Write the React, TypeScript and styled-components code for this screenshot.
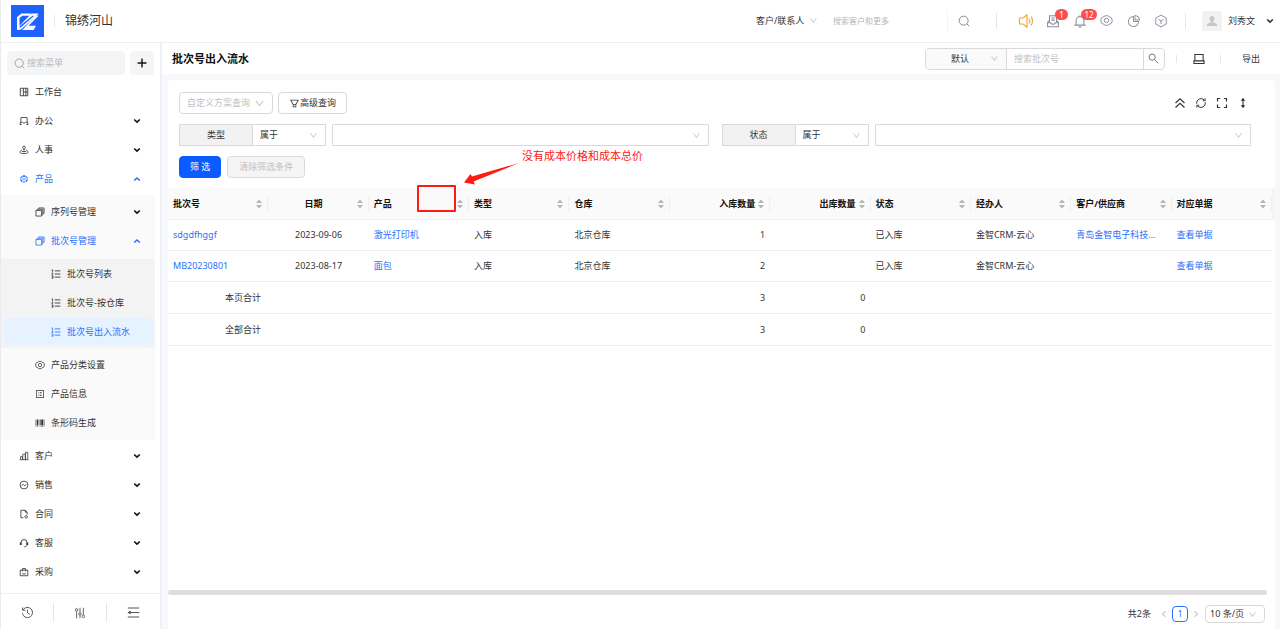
import React from "react";
import styled, { createGlobalStyle, css } from "styled-components";
import {
  AiOutlineBarcode,
  AiOutlineCodeSandbox,
  AiOutlineDown,
  AiOutlineFilter,
  AiOutlineLeft,
  AiOutlinePieChart,
  AiOutlinePlus,
  AiOutlineProfile,
  AiOutlineRight,
} from "react-icons/ai";

const blue = "#2b70fb";
const line = "#f0f0f0";
const control = "#d9d9d9";

const GlobalStyle = createGlobalStyle`
  * { box-sizing: border-box; }
  body {
    margin: 0;
    background: #fff;
    color: #333;
    font: 9px/16px "Noto Sans", "Noto Sans CJK SC", sans-serif;
  }
  button, input, select { font: inherit; color: inherit; margin: 0; outline: none; }
  button { cursor: pointer; }
  a { color: inherit; text-decoration: none; }
  svg { display: block; flex: none; }
`;

/* ---------- icons ---------- */

type IconProps = { size?: number; weight?: number; children?: React.ReactNode };

const Stroke = ({ size = 10, weight = 1.4, children }: IconProps) => (
  <svg width={size} height={size} viewBox="0 0 16 16" fill="none" stroke="currentColor" strokeWidth={weight} aria-hidden="true">
    {children}
  </svg>
);

const DeskIcon = () => (
  <Stroke><path d="M2 2h12v12H2zM7 2v12M11 2v12M7 8h7M4 6h1" /></Stroke>
);
const OfficeIcon = () => (
  <Stroke weight={1.3}><path d="M3 9.500V2.500h10v7M2 14v-4h3.500c.5 2 4.500 2 5 0H14v4M1.500 13.500h3M11.500 13.500h3" /></Stroke>
);
const PeopleIcon = () => (
  <Stroke weight={1.3}><circle cx="8" cy="4" r="2.2" /><path d="M8 6v4M4.500 8C1 9 1 13.500 4 13.500h8c3 0 3-4.500-.5-5.500M4.500 10.500h7" /></Stroke>
);
const StackIcon = () => (
  <Stroke weight={1.3}><path d="M1.500 5.500h9v9h-9zM3.500 5V3.500h9v9H11M6 3V1.500h8.500V10H13" /></Stroke>
);
const ListIcon = () => (
  <Stroke>
    <path d="M6 3h9M6 8h9M6 13h9" />
    <path strokeWidth="1.200" d="M1 2l1.500-.8V5M1 6.500h2.300L1.200 9.500h2.300M1 11.500h2.300v3.300H1M1.500 13h1.800" />
  </Stroke>
);
const ClientIcon = () => (
  <Stroke weight={1.2}><path d="M1 14h14M2.500 14V9h3v5M6 14V5.500l4-1V14M10.500 14V2H14v12" /></Stroke>
);
const SaleIcon = () => (
  <Stroke weight={1.3}><circle cx="8" cy="8" r="6.300" /><path d="M4 9l3-2 2 2 3-2" /></Stroke>
);
const ContractIcon = () => (
  <Stroke weight={1.3}><path d="M7 14H3V2h7l3 3v4M10 2v3h3" /><circle cx="11.500" cy="12.500" r="2" /></Stroke>
);
const ServiceIcon = () => (
  <Stroke><path d="M3.500 11V7a4.500 4.500 0 0 1 9 0v4c0 2-1.500 3-4 3" /><path strokeWidth="2.400" d="M2.500 7v4M13.500 7v4" /></Stroke>
);
const BuyIcon = () => (
  <Stroke weight={1.3}><path d="M2 5h12v9H2zM5.500 7V2.500h5V7M5 11h6" /></Stroke>
);
const SearchIcon = ({ size = 12 }: { size?: number }) => (
  <Stroke size={size} weight={1.3}><circle cx="7.500" cy="7.500" r="6" /><path d="M12 12l3 3" /></Stroke>
);
const LensIcon = () => (
  <Stroke size={11}><circle cx="6" cy="6" r="4.500" /><path d="M9.500 9.500l5.500 5.500" /></Stroke>
);
const NutIcon = ({ size = 10 }: { size?: number }) => (
  <Stroke size={size} weight={1.2}>
    <path strokeLinejoin="round" d="M5.500 2.500Q8 1.400 10.500 2.500l1 1.200 2 .4Q15 6 15 8t-1.500 3.900l-2 .4-1 1.200Q8 14.600 5.500 13.500l-1-1.200-2-.4Q1 10 1 8t1.500-3.900l2-.4z" />
    <circle cx="8" cy="8" r="2.700" />
  </Stroke>
);
const SoundIcon = () => (
  <Stroke size={16} weight={1.2}>
    <path strokeLinejoin="round" d="M1.500 5H5l4-3.300v12.600L5 11H1.500zM11 5.500q1.600 2.500 0 5M13 3.500q3 4.500 0 9" />
  </Stroke>
);
const BellIcon = () => (
  <Stroke size={14} weight={1.2}>
    <path d="M3.500 12.500V7.500a4.500 4.500 0 0 1 9 0v5M1.500 12.700h13M6.500 14.700h3M8 3V1.500" />
  </Stroke>
);
const InboxIcon = () => (
  <Stroke size={14} weight={1.2}>
    <path d="M4 9V2h8v7M6 4.500h4M6 7h4M4 7.500L1.800 9.500v5h12.400v-5L12 7.500M1.800 10h3.500c.6 2.300 4.800 2.300 5.400 0h3.500" />
  </Stroke>
);
const HexIcon = () => (
  <Stroke size={14} weight={1.1}>
    <path d="M8 1.300l6 3.200v7L8 14.700l-6-3.200v-7zM5 6l3 2 3-2M8 8v3.500" />
  </Stroke>
);
const MonitorIcon = () => (
  <Stroke size={12}><path d="M2.500 2h11v8.500h-11zM1.200 10.500h13.600V14H1.200z" /></Stroke>
);
const CollapseIcon = () => (
  <Stroke size={12} weight={1.6}><path d="M2 8l6-5.500L14 8M2 14l6-5.500 6 5.500" /></Stroke>
);
const RefreshIcon = () => (
  <Stroke size={12} weight={1.3}>
    <path d="M2.200 9A6 6 0 0 1 12.500 4M13.800 7A6 6 0 0 1 3.500 12M13.500 1.800V5h-3M2.500 14.200V11h3" />
  </Stroke>
);
const ExpandIcon = () => (
  <Stroke size={12} weight={1.6}><path d="M2 6V2h3.500M10.500 2H14v4M14 10v4h-3.500M5.500 14H2v-4" /></Stroke>
);
const HeightIcon = () => (
  <Stroke size={12} weight={1.5}>
    <path d="M8 3v10" />
    <path fill="currentColor" stroke="none" d="M8 1l3 4H5zM8 15l-3-4h6z" />
  </Stroke>
);
const HistoryIcon = () => (
  <Stroke size={13} weight={1.2}>
    <path d="M2.500 4.800A6.300 6.300 0 1 1 1.700 9M2 1.800v3.400h3.400M8 4.500V8.500l2.800 1.800" />
  </Stroke>
);
const SlidersIcon = () => (
  <Stroke size={12} weight={1.2}>
    <path d="M3.500 6v9M8 1v6.500M8 11v4M12.500 1v9.500" />
    <circle cx="3.500" cy="3.800" r="1.700" />
    <circle cx="8" cy="9.200" r="1.600" />
    <circle cx="12.500" cy="12.500" r="1.700" />
  </Stroke>
);
const FoldIcon = () => (
  <Stroke size={13} weight={1.3}>
    <path d="M1 2.500h14M7 8h8M1 13.500h14M2.500 8H7" />
    <path fill="currentColor" stroke="none" d="M.5 8L4.500 5.500v5z" />
  </Stroke>
);
const Caret = ({ up = false }: { up?: boolean }) => (
  <svg width="8" height="8" viewBox="0 0 8 8" fill="none" stroke="currentColor" strokeWidth="1.600" aria-hidden="true">
    <path d={up ? "M1.200 5.500L4 3l2.800 2.500" : "M1.200 2.500L4 5.200l2.800-2.700"} />
  </svg>
);
const SortIcon = () => (
  <svg width="8" height="10" viewBox="0 0 8 10" fill="#b5b5b5" aria-hidden="true">
    <path d="M4 .5L7 4H1zM4 9.500L1 6h6z" />
  </svg>
);
const LogoMark = () => (
  <svg width="33" height="32" viewBox="0 0 33 32" role="img" aria-label="logo">
    <path fill="#1f62fb" d="M0 0h33v32H0z" />
    <path fill="#fff" d="M10.500 8.500H20l-1.800 2.300h-6.700l-3 2.200v7.800L20.500 8.500h7.300L10 24.500 6 25V12z" />
    <path fill="#1f62fb" d="M21.500 10.700h1.800L8.800 23.200V21z" />
    <path fill="#fff" d="M27.800 10.500L17.500 20.800H25L22.500 25H11.200L25 10.500z" />
  </svg>
);

/* ---------- shared controls ---------- */

const Divider = styled.span<{ $h?: number; $faint?: boolean }>`
  flex: none;
  width: 1px;
  height: ${(p) => p.$h ?? 14}px;
  background: ${(p) => (p.$faint ? "#f4f4f4" : "#e6e6e6")};
`;

const IconButton = styled.button<{ $color?: string }>`
  position: relative;
  display: grid;
  place-items: center;
  width: 16px;
  height: 20px;
  padding: 0;
  border: 0;
  background: none;
  color: ${(p) => p.$color ?? "#333"};
`;

const SelectBox = styled.span<{ $w?: number; $bare?: boolean; $round?: boolean; $muted?: boolean; $pad?: number }>`
  position: relative;
  display: flex;
  align-items: center;
  height: 22px;
  ${(p) => (p.$w ? css`flex: none; width: ${p.$w}px;` : css`flex: 1; min-width: 0;`)}
  border: ${(p) => (p.$bare ? "0" : `1px solid ${control}`)};
  border-radius: ${(p) => (p.$round ? 4 : 1)}px;
  color: ${(p) => (p.$muted ? "#bfbfbf" : "#333")};
  select {
    width: 100%;
    height: 100%;
    padding: 0 0 0 ${(p) => p.$pad ?? 7}px;
    border: 0;
    background: none;
    appearance: none;
  }
  svg {
    position: absolute;
    right: 7px;
    color: #bfbfbf;
    pointer-events: none;
  }
`;

type SelectProps = React.ComponentProps<typeof SelectBox> & { label: string; value: string; arrow?: number };
const Select = ({ label, value, arrow = 9, ...rest }: SelectProps) => (
  <SelectBox {...rest}>
    <select aria-label={label} defaultValue={value}>
      <option value={value}>{value}</option>
    </select>
    <AiOutlineDown size={arrow} />
  </SelectBox>
);

/* ---------- page frame ---------- */

const Page = styled.div`
  display: flex;
  flex-direction: column;
  min-height: 100vh;
  border-left: 1px solid #e8eaee;
`;

const Header = styled.header`
  display: flex;
  align-items: center;
  justify-content: space-between;
  height: 43px;
  padding: 0 6px 1px 10px;
  border-bottom: 1px solid ${line};
`;

const Brand = styled.div`
  display: flex;
  align-items: center;
  gap: 10px;
  font-size: 12px;
`;

const HeaderTools = styled.div`
  display: flex;
  align-items: center;
`;

const GlobalSearch = styled.form`
  display: flex;
  align-items: center;
  input {
    width: 122px;
    padding: 0 0 0 8px;
    border: 0;
    font-size: 8px;
    &::placeholder { color: #b8b8b8; }
  }
  button { margin: 0 24px 0 8px; }
`;

const ToolGroup = styled.div<{ $start: number; $end: number }>`
  display: flex;
  align-items: center;
  gap: 11px;
  padding: 0 ${(p) => p.$end}px 0 ${(p) => p.$start}px;
`;

const Badge = styled.span<{ $wide?: boolean }>`
  position: absolute;
  left: ${(p) => (p.$wide ? 9 : 10)}px;
  top: -2px;
  width: ${(p) => (p.$wide ? 16 : 13)}px;
  height: 11px;
  border-radius: 6px;
  background: #ff4d4f;
  color: #fff;
  font-size: 8px;
  line-height: 11px;
  text-align: center;
`;

const UserButton = styled.button`
  display: flex;
  align-items: center;
  gap: 6px;
  margin-left: 16px;
  padding: 0;
  border: 0;
  background: none;
  > svg { margin-left: 5px; }
`;

const Avatar = styled.span`
  display: grid;
  place-items: center;
  width: 20px;
  height: 20px;
  border-radius: 3px;
  background: #f2f2f2;
  color: #c8c8c8;
`;

const Body = styled.div`
  display: flex;
  flex: 1;
`;

/* ---------- sidebar ---------- */

const Sidebar = styled.aside`
  display: flex;
  flex-direction: column;
  flex: none;
  width: 161px;
  border-right: 2px solid #eff1f4;
`;

const MenuSearch = styled.div`
  display: flex;
  gap: 5px;
  padding: 8px 6px 2px;
`;

const MenuField = styled.label`
  display: flex;
  flex: 1;
  align-items: center;
  gap: 2px;
  height: 24px;
  padding: 0 7px;
  border-radius: 4px;
  background: #f4f5f7;
  color: #999;
  input {
    width: 100%;
    min-width: 0;
    padding: 0;
    border: 0;
    background: none;
    &::placeholder { color: #bbb; }
  }
`;

const AddButton = styled.button`
  display: grid;
  place-items: center;
  width: 24px;
  height: 24px;
  padding: 0;
  border: 0;
  border-radius: 4px;
  background: #f4f5f7;
  color: #111;
  svg { stroke-width: 40px; }
`;

const Menu = styled.nav`
  display: flex;
  flex: 1;
  flex-direction: column;
`;

const MenuLink = styled.a<{ $level: number; $blue?: boolean; $active?: boolean }>`
  display: flex;
  align-items: center;
  gap: 6px;
  height: 27px;
  margin: 1px 2px 1px 3px;
  padding: 0 12px 0 ${(p) => p.$level * 16 - 1}px;
  border-radius: 4px;
  background: ${(p) => (p.$active ? "#e6f2ff" : "none")};
  color: ${(p) => (p.$blue || p.$active ? blue : "#333")};
  > span { flex: 1; }
  > span + svg { color: ${(p) => (p.$blue ? blue : "#111")}; }
`;

const SubMenu = styled.div<{ $deep?: boolean }>`
  display: flex;
  flex-direction: column;
  width: 154px;
  margin: ${(p) => (p.$deep ? "4px 0 2px" : "2px 0 1px")};
  padding: ${(p) => (p.$deep ? "0 0 2px" : "2px 0 3px")};
  background: ${(p) => (p.$deep ? "#f3f3f3" : "#fafafa")};
`;

const MenuList = styled.div`
  display: flex;
  flex-direction: column;
  width: 154px;
`;

const SideFooter = styled.div`
  display: grid;
  grid-template-columns: repeat(3, 1fr);
  height: 36px;
  padding: 9px 0 7px;
  border-top: 1px solid ${line};
  button {
    display: grid;
    place-items: center;
    padding: 0;
    border: 0;
    border-right: 1px solid #e6e6e6;
    background: none;
    color: #555;
  }
  button:last-child { border-right: 0; }
`;

type Entry = { text: string; icon: React.ReactNode; fold?: "open" | "closed"; active?: boolean };

const Item = ({ level, e }: { level: number; e: Entry }) => (
  <MenuLink href="#" $level={level} $blue={e.fold === "open"} $active={e.active}>
    {e.icon}
    <span>{e.text}</span>
    {e.fold && <Caret up={e.fold === "open"} />}
  </MenuLink>
);

const topEntries: Entry[] = [
  { text: "工作台", icon: <DeskIcon /> },
  { text: "办公", icon: <OfficeIcon />, fold: "closed" },
  { text: "人事", icon: <PeopleIcon />, fold: "closed" },
  { text: "产品", icon: <AiOutlineCodeSandbox size={10} />, fold: "open" },
];
const productEntries: Entry[] = [
  { text: "序列号管理", icon: <StackIcon />, fold: "closed" },
  { text: "批次号管理", icon: <StackIcon />, fold: "open" },
];
const batchEntries: Entry[] = [
  { text: "批次号列表", icon: <ListIcon /> },
  { text: "批次号-按仓库", icon: <ListIcon /> },
  { text: "批次号出入流水", icon: <ListIcon />, active: true },
];
const productMore: Entry[] = [
  { text: "产品分类设置", icon: <NutIcon /> },
  { text: "产品信息", icon: <AiOutlineProfile size={10} /> },
  { text: "条形码生成", icon: <AiOutlineBarcode size={10} /> },
];
const bottomEntries: Entry[] = [
  { text: "客户", icon: <ClientIcon />, fold: "closed" },
  { text: "销售", icon: <SaleIcon />, fold: "closed" },
  { text: "合同", icon: <ContractIcon />, fold: "closed" },
  { text: "客服", icon: <ServiceIcon />, fold: "closed" },
  { text: "采购", icon: <BuyIcon />, fold: "closed" },
];
const items = (level: number, list: Entry[]) => list.map((e) => <Item key={e.text} level={level} e={e} />);

/* ---------- main ---------- */

const Main = styled.main`
  display: flex;
  flex: 1;
  flex-direction: column;
  min-width: 0;
  background: #f7f8fc;
`;

const TitleBar = styled.div`
  display: flex;
  align-items: center;
  justify-content: space-between;
  height: 31px;
  padding: 0 12px 0 10px;
  background: #fff;
  h1 {
    margin: 0;
    color: #111;
    font-size: 11px;
    font-weight: 700;
  }
`;

const TitleTools = styled.div`
  display: flex;
  align-items: center;
`;

const BatchSearch = styled.form`
  display: flex;
  height: 22px;
  margin-right: 11px;
  border: 1px solid ${control};
  border-radius: 4px;
  overflow: hidden;
  > span { height: 20px; padding-left: 18px; background: #fafafa; }
  input {
    width: 138px;
    padding: 0 7px;
    border: solid ${control};
    border-width: 0 1px;
    &::placeholder { color: #bfbfbf; }
  }
  button { height: 20px; width: 20px; }
`;

const ExportButton = styled.button`
  margin-left: 21px;
  padding: 0 8px 0 0;
  border: 0;
  background: none;
`;

const Card = styled.section`
  position: relative;
  display: flex;
  flex: 1;
  flex-direction: column;
  margin: 6px 5px 0 6px;
  border-radius: 4px 4px 0 0;
  background: #fff;
`;

const Filters = styled.div`
  display: flex;
  flex-direction: column;
  gap: 10px;
  padding: 12px 24px 10px 11px;
`;

const FilterRow = styled.div<{ $gap: number }>`
  display: flex;
  align-items: center;
  gap: ${(p) => p.$gap}px;
`;

const Button = styled.button<{ $kind?: "primary" | "off" }>`
  display: flex;
  align-items: center;
  justify-content: center;
  height: 22px;
  padding: 0 ${(p) => (p.$kind === "off" ? 11 : 10)}px;
  border: 1px solid ${(p) => (p.$kind === "primary" ? "#0b5cff" : control)};
  border-radius: 4px;
  background: ${(p) => (p.$kind === "primary" ? "#0b5cff" : p.$kind === "off" ? "#f5f5f5" : "#fff")};
  color: ${(p) => (p.$kind === "primary" ? "#fff" : p.$kind === "off" ? "#bfbfbf" : "#333")};
`;

const ViewTools = styled.div`
  display: flex;
  gap: 5px;
  margin-left: auto;
`;

const FilterField = styled.div`
  display: flex;
  flex: 1;
  min-width: 0;
  > span:last-child { margin-left: 6px; }
  > span:nth-child(2) { border-left: 0; }
`;

const FieldName = styled.span`
  flex: none;
  width: 74px;
  height: 22px;
  border: 1px solid ${control};
  background: #f2f2f2;
  line-height: 20px;
  text-align: center;
`;

const Table = styled.table`
  width: 100%;
  table-layout: fixed;
  border-collapse: separate;
  border-spacing: 0;
`;

const Gutter = styled.col`
  width: 3px;
`;

const HeadCell = styled.th<{ $align?: string }>`
  height: 32px;
  padding: 0;
  border-bottom: 1px solid ${line};
  background: #fafafa;
  color: #111;
  font-weight: 700;
  text-align: ${(p) => p.$align ?? "left"};
  > div {
    display: flex;
    align-items: center;
    gap: 2px;
    height: 16px;
    padding: 0 4px 0 5px;
    border-right: 1px solid ${line};
    white-space: nowrap;
  }
  span { flex: 1; }
`;

const GutterHead = styled.td`
  padding: 0;
  background: #f5f5f5;
`;

const Cell = styled.td<{ $align?: string; $label?: boolean; $total?: boolean }>`
  height: ${(p) => (p.$total ? 32 : 31)}px;
  padding: 0 5px 0 ${(p) => (p.$label ? 57 : 5)}px;
  border-bottom: 1px solid ${line};
  overflow: hidden;
  text-align: ${(p) => p.$align ?? "left"};
  text-overflow: ellipsis;
  white-space: nowrap;
  a { color: ${blue}; }
`;

const ScrollTrack = styled.div`
  height: 5px;
  margin: auto 8px 0 0;
  border-radius: 3px;
  background: #dedede;
`;

const Pager = styled.nav`
  display: flex;
  align-items: center;
  justify-content: flex-end;
  height: 34px;
  padding: 4px 10px 0 0;
  > span:first-child { margin-right: 5px; }
  > span:last-child { height: 18px; margin-left: 1px; }
`;

const PageNumber = styled.button`
  width: 16px;
  height: 16px;
  padding: 0;
  border: 1px solid ${blue};
  border-radius: 4px;
  background: #fff;
  color: ${blue};
  line-height: 14px;
`;

/* Review note laid over the table */
const NoteBox = styled.span`
  position: absolute;
  left: 249px;
  top: 105px;
  width: 39px;
  height: 27px;
  border: 2px solid #ff1a12;
  border-radius: 1px;
`;
const NoteArrow = styled.svg`
  position: absolute;
  left: 295px;
  top: 82px;
`;
const NoteText = styled.span`
  position: absolute;
  left: 354px;
  top: 68px;
  color: #ff1a12;
  font-size: 11px;
`;

type Column = { title: string; align?: string };
const columns: Column[] = [
  { title: "批次号" },
  { title: "日期", align: "center" },
  { title: "产品" },
  { title: "类型" },
  { title: "仓库" },
  { title: "入库数量", align: "right" },
  { title: "出库数量", align: "right" },
  { title: "状态" },
  { title: "经办人" },
  { title: "客户/供应商" },
  { title: "对应单据" },
];
const linked = [0, 2, 9, 10];
const rows = [
  ["sdgdfhggf", "2023-09-06", "激光打印机", "入库", "北京仓库", "1", "", "已入库", "金智CRM-云心", "青岛金智电子科技...", "查看单据"],
  ["MB20230801", "2023-08-17", "面包", "入库", "北京仓库", "2", "", "已入库", "金智CRM-云心", "", "查看单据"],
];

export default function App() {
  return (
    <Page>
      <GlobalStyle />
      <Header>
        <Brand>
          <LogoMark />
          <Divider $h={12} />
          <span>锦绣河山</span>
        </Brand>
        <HeaderTools>
          <GlobalSearch>
            <Select label="搜索范围" value="客户/联系人" $w={69} $bare $pad={0} />
            <input aria-label="全局搜索" placeholder="搜索客户和更多" />
            <Divider $h={22} $faint />
            <IconButton type="button" $color="#888" aria-label="搜索"><SearchIcon size={12} /></IconButton>
          </GlobalSearch>
          <Divider $h={16} />
          <ToolGroup $start={21} $end={16}>
            <IconButton $color="#f7a63c" aria-label="公告"><SoundIcon /></IconButton>
            <IconButton $color="#87909c" aria-label="收件箱"><InboxIcon /><Badge>1</Badge></IconButton>
            <IconButton $color="#87909c" aria-label="通知"><BellIcon /><Badge $wide>12</Badge></IconButton>
            <IconButton $color="#87909c" aria-label="设置"><NutIcon size={13} /></IconButton>
            <IconButton $color="#87909c" aria-label="统计"><AiOutlinePieChart size={14} /></IconButton>
            <IconButton $color="#87909c" aria-label="应用"><HexIcon /></IconButton>
          </ToolGroup>
          <Divider $h={16} />
          <UserButton>
            <Avatar>
              <svg width="12" height="12" viewBox="0 0 12 12" fill="currentColor" aria-hidden="true">
                <path d="M6 1a2.600 2.800 0 0 1 1.300 5.200v1L11 9v2H1V9l3.700-1.800v-1A2.600 2.800 0 0 1 6 1z" />
              </svg>
            </Avatar>
            <span>刘秀文</span>
            <Caret />
          </UserButton>
        </HeaderTools>
      </Header>

      <Body>
        <Sidebar>
          <MenuSearch>
            <MenuField>
              <SearchIcon size={11} />
              <input aria-label="搜索菜单" placeholder="搜索菜单" />
            </MenuField>
            <AddButton aria-label="新增"><AiOutlinePlus size={12} /></AddButton>
          </MenuSearch>
          <Menu>
            <MenuList>{items(1, topEntries)}</MenuList>
            <SubMenu>
              {items(2, productEntries)}
              <SubMenu $deep>{items(3, batchEntries)}</SubMenu>
              {items(2, productMore)}
            </SubMenu>
            <MenuList>{items(1, bottomEntries)}</MenuList>
          </Menu>
          <SideFooter>
            <button aria-label="历史"><HistoryIcon /></button>
            <button aria-label="调整"><SlidersIcon /></button>
            <button aria-label="收起菜单"><FoldIcon /></button>
          </SideFooter>
        </Sidebar>

        <Main>
          <TitleBar>
            <h1>批次号出入流水</h1>
            <TitleTools>
              <BatchSearch>
                <Select label="查询方案" value="默认" $w={80} $bare />
                <input aria-label="搜索批次号" placeholder="搜索批次号" />
                <IconButton type="button" $color="#777" aria-label="搜索"><LensIcon /></IconButton>
              </BatchSearch>
              <Divider $h={8} />
              <ToolGroup $start={14} $end={13}><IconButton aria-label="显示"><MonitorIcon /></IconButton></ToolGroup>
              <Divider $h={8} />
              <ExportButton>导出</ExportButton>
            </TitleTools>
          </TitleBar>

          <Card>
            <Filters>
              <FilterRow $gap={5}>
                <Select label="自定义方案" value="自定义方案查询" arrow={11} $w={94} $round $muted />
                <Button><AiOutlineFilter size={11} />高级查询</Button>
                <ViewTools>
                  <IconButton aria-label="折叠"><CollapseIcon /></IconButton>
                  <IconButton aria-label="刷新"><RefreshIcon /></IconButton>
                  <IconButton aria-label="全屏"><ExpandIcon /></IconButton>
                  <IconButton aria-label="行高"><HeightIcon /></IconButton>
                </ViewTools>
              </FilterRow>
              <FilterRow $gap={13}>
                {["类型", "状态"].map((name) => (
                  <FilterField key={name}>
                    <FieldName>{name}</FieldName>
                    <Select label={`${name}条件`} value="属于" $w={73} />
                    <Select label={name} value="" />
                  </FilterField>
                ))}
              </FilterRow>
              <FilterRow $gap={6}>
                <Button $kind="primary">筛 选</Button>
                <Button $kind="off">清除筛选条件</Button>
              </FilterRow>
            </Filters>

            <Table>
              <colgroup>
                {columns.map((c) => <col key={c.title} />)}
                <Gutter />
              </colgroup>
              <thead>
                <tr>
                  {columns.map((c) => (
                    <HeadCell key={c.title} $align={c.align} scope="col">
                      <div><span>{c.title}</span><SortIcon /></div>
                    </HeadCell>
                  ))}
                  <GutterHead />
                </tr>
              </thead>
              <tbody>
                {rows.map((row) => (
                  <tr key={row[0]}>
                    {row.map((value, i) => (
                      <Cell key={columns[i].title} $align={columns[i].align}>
                        {linked.includes(i) && value ? <a href="#">{value}</a> : value}
                      </Cell>
                    ))}
                  </tr>
                ))}
                {["本页合计", "全部合计"].map((name) => (
                  <tr key={name}>
                    <Cell colSpan={2} $total $label>{name}</Cell>
                    <Cell colSpan={3} $total />
                    <Cell $align="right" $total>3</Cell>
                    <Cell $align="right" $total>0</Cell>
                    <Cell colSpan={4} $total />
                  </tr>
                ))}
              </tbody>
            </Table>

            <ScrollTrack />
            <Pager aria-label="分页">
              <span>共2条</span>
              <IconButton $color="#aaa" aria-label="上一页"><AiOutlineLeft size={8} /></IconButton>
              <PageNumber>1</PageNumber>
              <IconButton $color="#aaa" aria-label="下一页"><AiOutlineRight size={8} /></IconButton>
              <Select label="每页条数" value="10 条/页" $w={60} $round $pad={4} />
            </Pager>

            <NoteBox />
            <NoteArrow width="58" height="24" viewBox="0 0 58 24" aria-hidden="true">
              <path fill="#ff1a12" d="M56 1L9 14.500 7.500 12 1 20.500l11 2-1.500-3z" />
            </NoteArrow>
            <NoteText>没有成本价格和成本总价</NoteText>
          </Card>
        </Main>
      </Body>
    </Page>
  );
}
